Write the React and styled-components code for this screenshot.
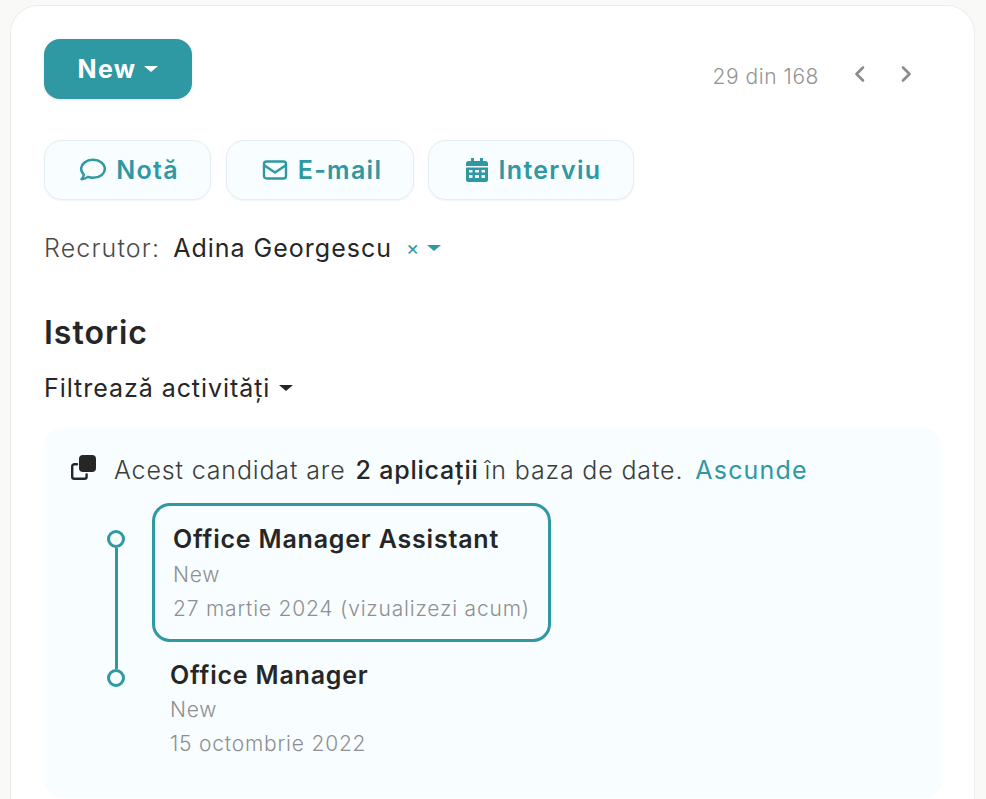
import React from "react";
import styled, { createGlobalStyle } from "styled-components";

const TEAL = "#2e98a3";

const GlobalStyle = createGlobalStyle`
  html, body {
    margin: 0;
    padding: 0;
    background: #f9f9f7;
    font-family: "Inter", "Open Sans", sans-serif;
    color: #262626;
    overflow: hidden;
  }
`;

const Page = styled.div`
  height: 799px;
  padding: 5px 11px 0 10px;
  box-sizing: border-box;
  overflow: hidden;
`;

const Card = styled.main`
  background: #fff;
  border: 1px solid #ececec;
  border-bottom: none;
  border-radius: 28px 28px 0 0;
  height: 794px;
  box-sizing: border-box;
  padding: 33px 33px 0;
`;

const TopRow = styled.div`
  display: flex;
  justify-content: space-between;
  align-items: flex-start;
`;

const NewButton = styled.button`
  width: 148px;
  height: 60px;
  border: none;
  border-radius: 16px;
  background: ${TEAL};
  box-shadow: 0 1px 3px rgba(0, 0, 0, 0.12);
  color: #fff;
  font: 700 25px "Inter", sans-serif;
  letter-spacing: 1.3px;
  display: flex;
  align-items: center;
  justify-content: center;
  gap: 8px;
  padding: 0 0 1px;
`;

const Caret = styled.span`
  width: 0;
  height: 0;
  border-left: ${(p) => p.$size || 7}px solid transparent;
  border-right: ${(p) => p.$size || 7}px solid transparent;
  border-top: ${(p) => (p.$size || 7) - 1}px solid ${(p) => p.$color || "currentColor"};
  display: inline-block;
`;

const Pager = styled.div`
  display: flex;
  align-items: center;
  color: #949494;
  font-size: 21px;
  font-weight: 300;
  margin-top: 19px;
  margin-right: 28px;
`;

const PagerCount = styled.span`
  padding-top: 6px;
  letter-spacing: 0.55px;
`;

const PagerIcon = styled.svg`
  width: 14px;
  height: 18px;
  margin-left: 32px;
  &:first-of-type {
    margin-left: 34px;
  }
`;

const Actions = styled.div`
  display: flex;
  margin-top: 41px;
`;

const ActionButton = styled.button`
  width: ${(p) => p.$width}px;
  height: 60px;
  margin-right: ${(p) => p.$gap}px;
  box-sizing: border-box;
  border: 1px solid #e5edf1;
  border-radius: 18px;
  background: #f8fdff;
  box-shadow: 0 1px 2px rgba(0, 0, 0, 0.05);
  color: ${TEAL};
  font: 600 25px "Inter", sans-serif;
  letter-spacing: 1.3px;
  display: flex;
  align-items: center;
  justify-content: center;
  gap: 10px;
  padding: 0 0 0 4px;
`;

const RecruiterRow = styled.div`
  display: flex;
  align-items: center;
  margin-top: 30px;
  height: 36px;
  font-size: 25px;
  letter-spacing: 1px;
`;

const RecruiterLabel = styled.span`
  color: #4a4a4a;
  font-weight: 300;
  letter-spacing: 1.15px;
  margin-right: 13px;
`;

const RecruiterName = styled.span`
  color: #262626;
  margin-right: 14px;
`;

const ClearMark = styled.span`
  color: ${TEAL};
  font-size: 20px;
  margin-right: 7px;
`;

const HistoryTitle = styled.h2`
  margin: 47px 0 0;
  font-size: 32px;
  font-weight: 600;
  line-height: 40px;
  letter-spacing: 1px;
  color: #262626;
`;

const FilterRow = styled.div`
  display: flex;
  align-items: center;
  gap: 9px;
  margin-top: 17px;
  height: 36px;
  font-size: 25px;
  letter-spacing: 0.95px;
`;

const Panel = styled.section`
  margin-top: 22px;
  width: 898px;
  height: 370px;
  box-sizing: border-box;
  background: #f8fdff;
  border-radius: 18px;
  padding: 24px 27px;
`;

const Notice = styled.div`
  display: flex;
  align-items: center;
  height: 36px;
  font-size: 25px;
  font-weight: 300;
  letter-spacing: 0.85px;
  color: #3d3d3d;
`;

const NoticeIcon = styled.svg`
  width: 26px;
  height: 26px;
  margin: -4px 17px 0 0;
`;

const Strong = styled.strong`
  font-weight: 500;
  color: #262626;
  letter-spacing: 0.8px;
  margin: 0 6px 0 10px;
`;

const HideLink = styled.a`
  color: ${TEAL};
  font-weight: 400;
  letter-spacing: 1.2px;
  margin-left: 12px;
`;

const Timeline = styled.div`
  display: flex;
  margin-top: 15px;
`;

const Rail = styled.div`
  display: flex;
  flex-direction: column;
  align-items: center;
  width: 18px;
  margin: 27px 27px 0 36px;
`;

const Dot = styled.span`
  width: 18px;
  height: 18px;
  box-sizing: border-box;
  border: 3px solid ${TEAL};
  border-radius: 50%;
  flex: none;
`;

const RailLine = styled.span`
  width: 3px;
  height: 121px;
  background: ${TEAL};
`;

const Apps = styled.div`
  display: flex;
  flex-direction: column;
  align-items: flex-start;
`;

const AppItem = styled.div`
  box-sizing: border-box;
  padding: 16px 18px;
  border: ${(p) => (p.$active ? `3px solid ${TEAL}` : "none")};
  border-radius: 18px;
  width: ${(p) => (p.$active ? "399px" : "auto")};
  height: ${(p) => (p.$active ? "139px" : "auto")};
`;

const AppTitle = styled.div`
  font-size: 25px;
  font-weight: 600;
  line-height: 34px;
  letter-spacing: 0.8px;
  margin-bottom: ${(p) => p.$gap}px;
  color: #262626;
`;

const AppMeta = styled.div`
  font-size: 21px;
  font-weight: 300;
  line-height: 34px;
  letter-spacing: 0.8px;
  color: #8f8f8f;
`;

const App = () => (
  <Page>
    <GlobalStyle />
    <Card>
      <TopRow>
        <NewButton>
          New <Caret />
        </NewButton>
        <Pager>
          <PagerCount>29 din 168</PagerCount>
          <PagerIcon viewBox="0 0 14 18" fill="none" stroke="#8c8c8c" strokeWidth="2.6" strokeLinecap="round" strokeLinejoin="round">
            <path d="M10 2.500 3.500 9l6.500 6.500" />
          </PagerIcon>
          <PagerIcon viewBox="0 0 14 18" fill="none" stroke="#8c8c8c" strokeWidth="2.6" strokeLinecap="round" strokeLinejoin="round">
            <path d="M4 2.500 10.500 9 4 15.500" />
          </PagerIcon>
        </Pager>
      </TopRow>

      <Actions>
        <ActionButton $width={167} $gap={15}>
          <svg width="26" height="24" viewBox="1.500 1.500 23 21" fill="none" stroke={TEAL} strokeWidth="2.2" strokeLinejoin="round">
            <path d="M13 3C7 3 2.500 6.400 2.500 11c0 2 .9 3.700 2.400 5.100-.3 1.700-1 3-2 4 2.200-.1 4.200-.9 5.600-2 1.400.5 2.900.8 4.500.8 6 0 10.500-3.400 10.500-7.900S19 3 13 3Z" />
          </svg>
          Notă
        </ActionButton>
        <ActionButton $width={188} $gap={14}>
          <svg width="26" height="22" viewBox="0 0 26 22" fill="none" stroke={TEAL} strokeWidth="2.4" strokeLinejoin="round">
            <rect x="2" y="2.500" width="22" height="17" rx="2.500" />
            <path d="M2.500 6.500 13 13.500l10.500-7" />
          </svg>
          E-mail
        </ActionButton>
        <ActionButton $width={206} $gap={0}>
          <svg width="24" height="26" viewBox="0 0 24 26" fill={TEAL}>
            <path d="M6 1h3v3h6V1h3v3h2.500A2.500 2.500 0 0 1 23 6.500V9H1V6.500A2.500 2.500 0 0 1 3.500 4H6V1Z" />
            <path fillRule="evenodd" d="M1 10.500h22v12a2.500 2.500 0 0 1-2.500 2.500h-17A2.500 2.500 0 0 1 1 22.500v-12Zm3 2.500v2.500h3.500V13H4Zm6 0v2.500h4V13h-4Zm6.500 0v2.500H20V13h-3.500ZM4 18v3h3.500v-3H4Zm6 0v3h4v-3h-4Zm6.500 0v3H20v-3h-3.500Z" />
          </svg>
          Interviu
        </ActionButton>
      </Actions>

      <RecruiterRow>
        <RecruiterLabel>Recrutor:</RecruiterLabel>
        <RecruiterName>Adina Georgescu</RecruiterName>
        <ClearMark>×</ClearMark>
        <Caret $color={TEAL} />
      </RecruiterRow>

      <HistoryTitle>Istoric</HistoryTitle>

      <FilterRow>
        Filtrează activități
        <Caret $color="#262626" />
      </FilterRow>

      <Panel>
        <Notice>
          <NoticeIcon viewBox="0 0 26 26">
            <path d="M6 9.200H3.400a2.200 2.200 0 0 0-2.200 2.200v10.400a2 2 0 0 0 2 2h10.400a2 2 0 0 0 2-2V19.500" fill="none" stroke="#262626" strokeWidth="2.400" strokeLinecap="round" />
            <rect x="8" y="0" width="17" height="17" rx="4" fill="#262626" />
          </NoticeIcon>
          Acest candidat are<Strong>2 aplicații</Strong>în baza de date.
          <HideLink>Ascunde</HideLink>
        </Notice>

        <Timeline>
          <Rail>
            <Dot />
            <RailLine />
            <Dot />
          </Rail>
          <Apps>
            <AppItem $active>
              <AppTitle $gap={2}>Office Manager Assistant</AppTitle>
              <AppMeta>New</AppMeta>
              <AppMeta>27 martie 2024 (vizualizezi acum)</AppMeta>
            </AppItem>
            <AppItem>
              <AppTitle $gap={1}>Office Manager</AppTitle>
              <AppMeta>New</AppMeta>
              <AppMeta>15 octombrie 2022</AppMeta>
            </AppItem>
          </Apps>
        </Timeline>
      </Panel>
    </Card>
  </Page>
);

export default App;
